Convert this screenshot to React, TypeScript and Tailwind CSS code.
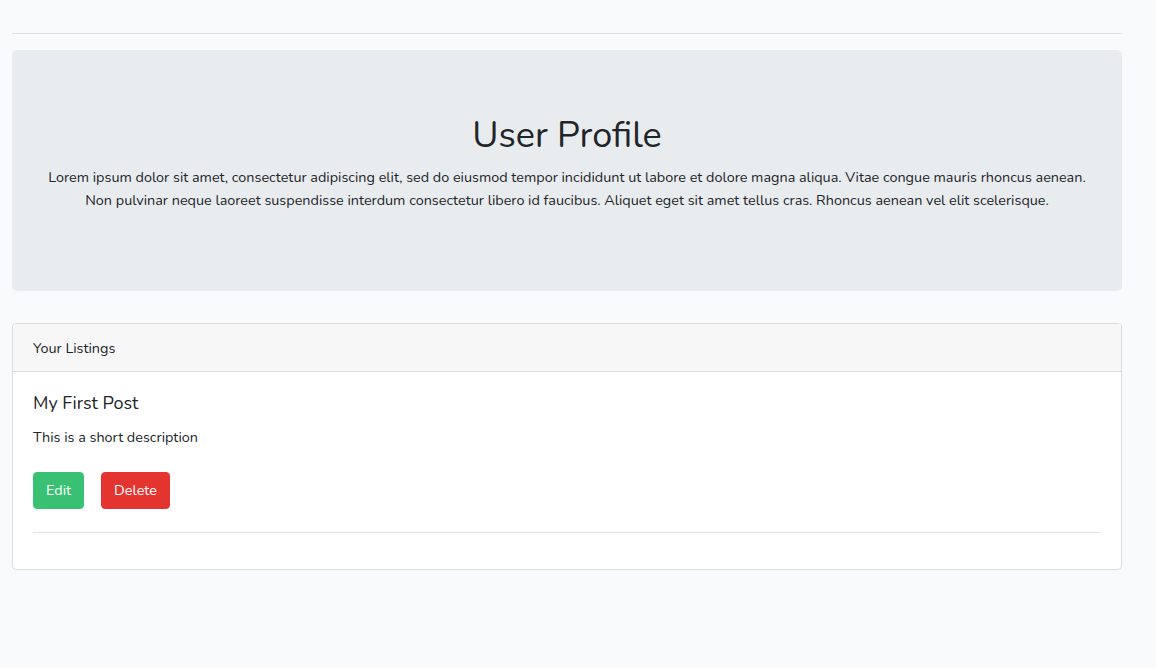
const App = () => {
  return (
    <div
      className="min-h-screen bg-[#f8fafc] text-[#212529] text-[14.4px] leading-[1.6]"
      style={{ fontFamily: "Nunito, Lato, 'Noto Sans', sans-serif" }}
    >
      <div className="w-[1110px] ml-[12px] pt-[33px]">
        <hr className="border-0 border-t border-[#e2e3e5]" />

        <div className="mt-[16px] mb-[32px] bg-[#e9ecef] rounded-[5px] px-[32px] pt-[64px] pb-[64px] text-center">
          <h1 className="text-[36px] leading-[1.2] font-normal mb-[9px]">User Profile</h1>
          <p className="mb-[15px]">
            Lorem ipsum dolor sit amet, consectetur adipiscing elit, sed do eiusmod tempor incididunt ut labore et dolore magna aliqua. Vitae congue mauris rhoncus aenean. Non pulvinar neque laoreet suspendisse interdum consectetur libero id faucibus. Aliquet eget sit amet tellus cras. Rhoncus aenean vel elit scelerisque.
          </p>
        </div>

        <div className="bg-white border border-[#dcdcdc] rounded-[4px] overflow-hidden">
          <div className="bg-[#f7f7f7] border-b border-[#dcdcdc] px-[20px] pt-[13px] pb-[11px]">
            Your Listings
          </div>
          <div className="p-[20px]">
            <h5 className="text-[18px] leading-[1.2] pt-[1px] mb-[11px]">My First Post</h5>
            <p className="mb-[23px]">This is a short description</p>
            <div className="flex items-center gap-[17px]">
              <button className="bg-[#38c172] text-white rounded-[4px] px-[12px] py-[6px] border border-[#38c172]">
                Edit
              </button>
              <button className="bg-[#e3342f] text-white rounded-[4px] px-[12px] py-[6px] border border-[#e3342f]">
                Delete
              </button>
            </div>
            <hr className="mt-[23px] mb-[16px] border-0 border-t border-[#e2e3e5]" />
          </div>
        </div>
      </div>
    </div>
  );
};

export default App;
